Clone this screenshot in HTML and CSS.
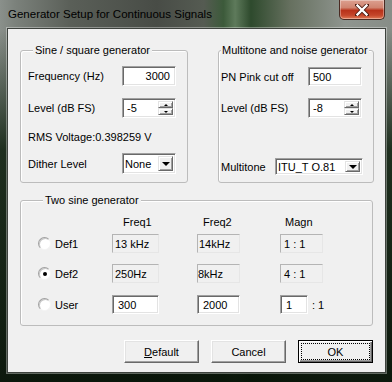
FILE: index.html
```html
<!DOCTYPE html>
<html lang="en">
<head>
    <meta charset="UTF-8">
    <title>Generator Setup for Continuous Signals</title>
    <link rel="stylesheet" href="styles.css">
</head>
<body>
    <div class="window">
        <div class="titlebar">
            <span class="title">Generator Setup for Continuous Signals</span>
            <div class="close-btn">
                <svg width="14" height="12" viewBox="0 0 14 12">
                    <path d="M2 1 L12 11 M12 1 L2 11" stroke="#4a1a10" stroke-width="4" stroke-linecap="square"/>
                    <path d="M2.5 1.5 L11.5 10.5 M11.5 1.5 L2.5 10.5" stroke="#ffffff" stroke-width="2.4" stroke-linecap="square"/>
                </svg>
            </div>
        </div>

        <div class="client">
            <div class="top-row">
                <!-- sine / square -->
                <div class="group group-sine">
                    <div class="group-title">Sine / square generator</div>
                    <div class="row row-1">
                        <span class="label">Frequency (Hz)</span>
                        <div class="edit num">3000</div>
                    </div>
                    <div class="row row-2">
                        <span class="label">Level (dB FS)</span>
                        <div class="edit spin">
                            <span class="spin-text">-5</span>
                            <div class="spin-btns">
                                <div class="raised up"></div>
                                <div class="raised down"></div>
                            </div>
                        </div>
                    </div>
                    <div class="row row-3">
                        <span>RMS Voltage:0.398259 V</span>
                    </div>
                    <div class="row row-4">
                        <span class="label">Dither Level</span>
                        <div class="edit combo">
                            <span class="combo-text">None</span>
                            <div class="raised drop"></div>
                        </div>
                    </div>
                </div>

                <!-- multitone / noise -->
                <div class="group group-noise">
                    <div class="group-title">Multitone and noise generator</div>
                    <div class="row row-1">
                        <span class="label">PN Pink cut off</span>
                        <div class="edit">500</div>
                    </div>
                    <div class="row row-2">
                        <span class="label">Level (dB FS)</span>
                        <div class="edit spin">
                            <span class="spin-text">-8</span>
                            <div class="spin-btns">
                                <div class="raised up"></div>
                                <div class="raised down"></div>
                            </div>
                        </div>
                    </div>
                    <div class="row row-3">
                        <span class="label short">Multitone</span>
                        <div class="edit combo wide">
                            <span class="combo-text">ITU_T O.81</span>
                            <div class="raised drop"></div>
                        </div>
                    </div>
                </div>
            </div>

            <!-- two sine -->
            <div class="group group-two">
                <div class="group-title">Two sine generator</div>
                <div class="pair-row heads">
                    <span class="c-sel"></span>
                    <span class="c-f1 head-f1">Freq1</span>
                    <span class="c-f2 head-f2">Freq2</span>
                    <span class="c-mg head-mg">Magn</span>
                </div>
                <div class="pair-row first">
                    <span class="c-sel"><span class="radio"></span>Def1</span>
                    <span class="c-f1 ro">13 kHz</span>
                    <span class="c-f2 ro tight">14kHz</span>
                    <span class="c-mg ro loose">1 : 1</span>
                </div>
                <div class="pair-row">
                    <span class="c-sel"><span class="radio checked"></span>Def2</span>
                    <span class="c-f1 ro">250Hz</span>
                    <span class="c-f2 ro flush">8kHz</span>
                    <span class="c-mg ro loose">4 : 1</span>
                </div>
                <div class="pair-row">
                    <span class="c-sel"><span class="radio"></span>User</span>
                    <span class="c-f1 edit">300</span>
                    <span class="c-f2 edit">2000</span>
                    <span class="c-mg"><span class="edit ratio">1</span>: 1</span>
                </div>
            </div>

            <div class="buttons">
                <div class="btn"><u>D</u>efault</div>
                <div class="btn">Cancel</div>
                <div class="btn default"><span class="focus">OK</span></div>
            </div>
        </div>
    </div>
</body>
</html>
```

FILE: styles.css
```css
body {
    margin: 0;
    background: #000;
    font-family: "Liberation Sans", Arial, sans-serif;
    font-size: 11px;
    color: #000;
}

.window {
    width: 392px;
    height: 382px;
    display: flex;
    flex-direction: column;
    background:
        linear-gradient(to bottom, rgba(0,0,0,0) 0px, rgba(0,0,0,0) 30px, rgba(12,30,12,0.85) 150px, rgba(6,18,6,0.95) 100%),
        linear-gradient(to right, #8a908b 0%, #7b817b 4%, #5a5f58 18%, #484c46 40%, #555b52 52%, #3c5a3a 57%, #5e7a5b 60%, #2e4a2d 64%, #66705f 74%, #8f958f 88%, #878d87 100%);
}

.titlebar {
    height: 29px;
    display: flex;
    align-items: flex-start;
    padding: 0 7px 0 8px;
}

.title {
    flex: 1;
    font-size: 11.5px;
    line-height: 14px;
    margin-top: 7px;
    color: #000;
}

.close-btn {
    width: 46px;
    height: 20px;
    box-sizing: border-box;
    display: flex;
    align-items: center;
    justify-content: center;
    border: 1px solid #4a2a22;
    border-top: none;
    border-radius: 0 0 5px 5px;
    background: linear-gradient(to bottom, #dca090 0%, #d08470 40%, #b8321a 55%, #c4452a 80%, #e07a55 100%);
    box-shadow: inset 0 0 0 1px rgba(255,255,255,0.35);
}

.client {
    margin-left: 8px;
    width: 377px;
    height: 343px;
    box-sizing: border-box;
    padding: 21px 12px 0 12px;
    background: #f0f0f0;
    box-shadow: 0 0 0 1px #3d423d, 0 0 0 2px rgba(255,255,255,0.35);
}

.top-row {
    display: flex;
    align-items: flex-start;
}

/* group boxes */
.group {
    display: flex;
    flex-direction: column;
    box-sizing: border-box;
    border: 1px solid #bcbcbc;
    border-radius: 3px;
    box-shadow: inset 1px 1px 0 #fff;
}

.group-title {
    align-self: flex-start;
    line-height: 13px;
    margin: -7px 0 0 5px;
    padding: 0 2px;
    background: #f0f0f0;
    white-space: nowrap;
}

.group-sine {
    width: 168px;
    height: 133px;
    padding: 0 11px 0 7px;
}

.group-noise {
    width: 156px;
    height: 133px;
    margin-left: 30px;
    padding: 0 10px 0 2px;
}

.group-noise .group-title {
    margin-left: 0;
    padding: 0 1px;
}

.row {
    display: flex;
    align-items: center;
}

.label {
    width: 94px;
    flex-shrink: 0;
}

.group-noise .label {
    width: 87px;
}

.group-noise .label.short {
    width: 54px;
}

.group-sine .row-1 { margin-top: 9px; height: 20px; }
.group-sine .row-2 { margin-top: 12px; height: 20px; }
.group-sine .row-3 { margin-top: 12px; height: 14px; }
.group-sine .row-4 { margin-top: 9px; height: 21px; }

.group-noise .row-1 { margin-top: 10px; height: 19px; }
.group-noise .row-2 { margin-top: 12px; height: 20px; }
.group-noise .row-3 { margin-top: 40px; height: 17px; }

/* edit controls */
.edit {
    box-sizing: border-box;
    width: 54px;
    height: 100%;
    display: flex;
    align-items: center;
    padding: 0 4px;
    background: #fff;
    border: 1px solid;
    border-color: #a0a0a0 #fff #fff #a0a0a0;
    box-shadow: inset 1px 1px 0 #696969, inset -1px -1px 0 #e3e3e3;
    white-space: nowrap;
}

.edit.num {
    justify-content: flex-end;
    padding-right: 5px;
}

.raised {
    box-sizing: border-box;
    background: #f0f0f0;
    border: 1px solid;
    border-color: #e3e3e3 #696969 #696969 #e3e3e3;
    box-shadow: inset 1px 1px 0 #fff, inset -1px -1px 0 #a0a0a0;
    display: flex;
    align-items: center;
    justify-content: center;
}

.spin {
    padding: 2px 2px 2px 4px;
    align-items: stretch;
}

.spin-text {
    flex: 1;
    display: flex;
    align-items: center;
}

.spin-btns {
    width: 15px;
    display: flex;
    flex-direction: column;
}

.spin-btns .raised {
    flex: 1;
}

.up::after,
.down::after,
.drop::after {
    content: "";
    width: 0;
    height: 0;
    border-left: 2px solid transparent;
    border-right: 2px solid transparent;
}

.up::after { border-bottom: 2px solid #000; }
.down::after { border-top: 2px solid #000; }

.combo {
    padding: 2px;
    align-items: stretch;
}

.combo.wide {
    width: 88px;
}

.combo-text {
    flex: 1;
    display: flex;
    align-items: center;
}

.drop {
    width: 15px;
}

.drop::after {
    border-left-width: 4px;
    border-right-width: 4px;
    border-top: 4px solid #000;
}

/* two sine generator */
.group-two {
    width: 353px;
    height: 126px;
    margin-top: 17px;
    padding: 0 0 0 17px;
}

.pair-row {
    display: flex;
    align-items: center;
    height: 19px;
    margin-top: 11px;
}

.pair-row.heads {
    height: 14px;
    margin-top: 8px;
}

.pair-row.first {
    margin-top: 5px;
}

.pair-row:last-child {
    margin-top: 12px;
}

.c-sel {
    width: 74px;
    display: flex;
    align-items: center;
}

.c-f1 { width: 47px; }
.c-f2 { width: 43px; margin-left: 38px; }
.c-mg { width: 60px; margin-left: 40px; display: flex; align-items: center; height: 100%; }

.head-f1 { padding-left: 11px; box-sizing: border-box; }
.head-f2 { padding-left: 6px; box-sizing: border-box; }
.head-mg { padding-left: 5px; box-sizing: border-box; }

.ro {
    box-sizing: border-box;
    height: 100%;
    display: flex;
    align-items: center;
    padding-left: 2px;
    border: 1px solid;
    border-color: #b4b4b4 #e6e6e6 #e6e6e6 #b4b4b4;
    white-space: nowrap;
}

.ro.tight { padding-left: 1px; }
.ro.flush { padding-left: 0; }
.ro.loose { padding-left: 3px; width: 43px; }

.pair-row .edit {
    height: 100%;
}

.c-f1.edit { width: 47px; padding-left: 5px; }
.c-f2.edit { width: 43px; padding-left: 5px; }

.edit.ratio {
    width: 28px;
    margin-right: 4px;
    padding-left: 5px;
}

.radio {
    width: 13px;
    height: 13px;
    box-sizing: border-box;
    border-radius: 50%;
    margin-right: 4px;
    background: #fff;
    border: 1px solid;
    border-color: #a0a0a0 #f4f4f4 #f4f4f4 #a0a0a0;
    box-shadow: inset 1px 1px 0 #c8c8c8;
    display: flex;
    align-items: center;
    justify-content: center;
}

.radio.checked::after {
    content: "";
    width: 4px;
    height: 4px;
    border-radius: 50%;
    background: #000;
}

/* buttons */
.buttons {
    width: 353px;
    display: flex;
    justify-content: flex-end;
    gap: 12px;
    margin-top: 14px;
}

.btn {
    width: 75px;
    height: 23px;
    box-sizing: border-box;
    display: flex;
    align-items: center;
    justify-content: center;
    background: #f0f0f0;
    border: 1px solid;
    border-color: #fff #696969 #696969 #fff;
    box-shadow: inset -1px -1px 0 #a0a0a0, inset 1px 1px 0 #e3e3e3;
}

.btn.default {
    border: 1px solid #000;
    box-shadow: inset 1px 1px 0 #fff, inset -1px -1px 0 #696969, inset -2px -2px 0 #a0a0a0;
    padding: 3px;
}

.focus {
    flex: 1;
    align-self: stretch;
    display: flex;
    align-items: center;
    justify-content: center;
    outline: 1px dotted #000;
}
```
